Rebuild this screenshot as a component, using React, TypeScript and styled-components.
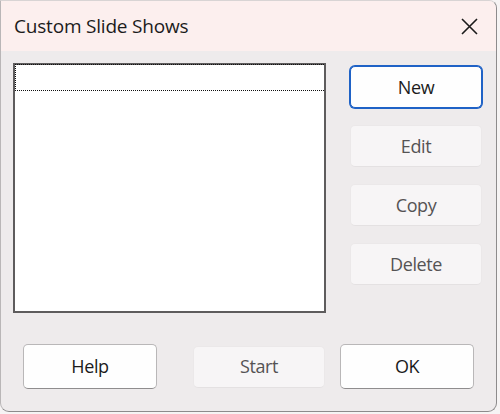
import styled, { createGlobalStyle } from 'styled-components';

const GlobalStyle = createGlobalStyle`
  html, body {
    margin: 0;
    padding: 0;
    background: #f6f4f4;
  }

  body {
    font-family: 'Open Sans', 'Noto Sans', sans-serif;
    color: #1b1b1b;
  }
`;

const StyledWindow = styled.div`
  box-sizing: border-box;
  width: 497px;
  height: 412px;
  display: flex;
  flex-direction: column;
  background: #eeebec;
  border: 1px solid #8d8b8c;
  border-top-color: #d8d4d4;
  border-left-color: #b9b6b7;
  border-radius: 0 8px 9px 9px;
  overflow: hidden;
`;

const StyledTitleBar = styled.div`
  height: 50px;
  flex: none;
  display: flex;
  align-items: center;
  justify-content: space-between;
  padding: 0 17px 0 13px;
  background: #fcefee;
  font-size: 19px;
  letter-spacing: -0.2px;
`;

const StyledClose = styled.button`
  width: 20px;
  height: 20px;
  padding: 0;
  border: none;
  background: none;
  display: flex;
  align-items: center;
  justify-content: center;
`;

const StyledBody = styled.div`
  display: flex;
  padding: 12px 0 0 12px;
`;

const StyledList = styled.div`
  box-sizing: border-box;
  width: 313px;
  height: 250px;
  border: 2px solid #5e5c5d;
  background: #fff;
`;

const StyledFocusRow = styled.div`
  height: 25px;
  border: 1px dotted #111;
  border-right: none;
  margin-top: -1px;
`;

const StyledSide = styled.div`
  display: flex;
  flex-direction: column;
  gap: 17px;
  margin-left: 24px;
  padding-top: 3px;
`;

const StyledButton = styled.button<{ $variant?: 'default' | 'focus' | 'disabled'; $shift?: number }>`
  box-sizing: border-box;
  flex: none;
  width: ${props => (props.$variant === 'default' ? '134px' : '132px')};
  height: ${props => (props.$variant === 'default' ? '45px' : '42px')};
  margin-left: ${props => props.$shift ?? 0}px;
  padding: 0 0 1px;
  font-family: 'Open Sans', 'Noto Sans', sans-serif;
  font-size: 18px;
  font-weight: 500;
  letter-spacing: -0.4px;
  border-radius: 5px;
  background: ${props => (props.$variant === 'disabled' ? '#f7f5f6' : '#fefefe')};
  color: ${props => (props.$variant === 'disabled' ? '#555354' : '#1b1b1b')};
  border: 1px solid ${props => (props.$variant === 'disabled' ? '#ebe8e9' : '#b9b7b8')};
  border-bottom-color: ${props => (props.$variant === 'disabled' ? '#e4e1e2' : '#8f8d8e')};

  ${props =>
    props.$variant === 'focus' &&
    `
      border: 1px solid #1f62c6;
      border-radius: 5px;
      box-shadow: 0 0 0 1px #1f62c6;
    `}
`;

const StyledFooter = styled.div`
  display: flex;
  align-items: center;
  padding: 31px 0 0 22px;
`;

export default function App() {
  return (
    <>
      <GlobalStyle />
      <StyledWindow>
        <StyledTitleBar>
          <span>Custom Slide Shows</span>
          <StyledClose type="button" aria-label="Close">
            <svg width="17" height="17" viewBox="0 0 17 17">
              <path d="M1 1 L16 16 M16 1 L1 16" stroke="#1b1b1b" strokeWidth="1.6" />
            </svg>
          </StyledClose>
        </StyledTitleBar>
        <StyledBody>
          <StyledList>
            <StyledFocusRow />
          </StyledList>
          <StyledSide>
            <StyledButton type="button" $variant="focus">New</StyledButton>
            <StyledButton type="button" $variant="disabled">Edit</StyledButton>
            <StyledButton type="button" $variant="disabled">Copy</StyledButton>
            <StyledButton type="button" $variant="disabled">Delete</StyledButton>
          </StyledSide>
        </StyledBody>
        <StyledFooter>
          <StyledButton type="button" $variant="default">Help</StyledButton>
          <StyledButton type="button" $variant="disabled" $shift={36}>Start</StyledButton>
          <StyledButton type="button" $variant="default" $shift={15}>OK</StyledButton>
        </StyledFooter>
      </StyledWindow>
    </>
  );
}
